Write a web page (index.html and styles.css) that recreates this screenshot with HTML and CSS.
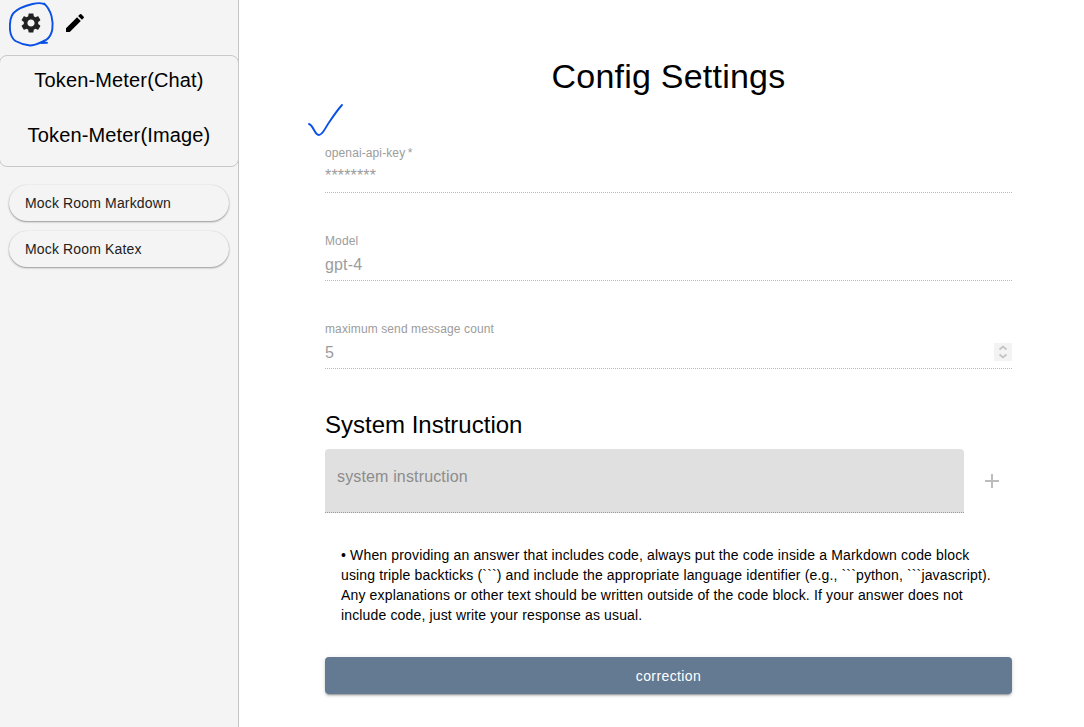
FILE: index.html
```html
<!DOCTYPE html>
<html lang="en">
<head>
<meta charset="utf-8">
<title>Config Settings</title>
<link rel="stylesheet" href="styles.css">
</head>
<body>
<div class="app">
  <aside class="sidebar">
    <div class="toolbar">
      <svg class="icon icon-gear" viewBox="0 0 24 24"><path d="M19.14 12.94c.04-.3.06-.61.06-.94 0-.32-.02-.64-.07-.94l2.03-1.58c.18-.14.23-.41.12-.61l-1.92-3.32c-.12-.22-.37-.29-.59-.22l-2.39.96c-.5-.38-1.03-.7-1.62-.94l-.36-2.54c-.04-.24-.24-.41-.48-.41h-3.84c-.24 0-.43.17-.47.41l-.36 2.54c-.59.24-1.13.57-1.62.94l-2.39-.96c-.22-.08-.47 0-.59.22L2.74 8.87c-.12.21-.08.47.12.61l2.03 1.58c-.05.3-.09.63-.09.94s.02.64.07.94l-2.03 1.58c-.18.14-.23.41-.12.61l1.92 3.32c.12.22.37.29.59.22l2.39-.96c.5.38 1.03.7 1.62.94l.36 2.54c.05.24.24.41.48.41h3.84c.24 0 .44-.17.47-.41l.36-2.54c.59-.24 1.13-.56 1.62-.94l2.39.96c.22.08.47 0 .59-.22l1.92-3.32c.12-.22.07-.47-.12-.61l-2.01-1.58zM12 15.6c-1.98 0-3.6-1.62-3.6-3.6s1.62-3.6 3.6-3.6 3.6 1.62 3.6 3.6-1.62 3.6-3.6 3.6z"/></svg>
      <svg class="icon" viewBox="0 0 24 24"><path d="M3 17.25V21h3.750L17.810 9.940l-3.750-3.750L3 17.250zM20.710 7.040c.39-.39.39-1.020 0-1.410l-2.340-2.340a.996.996 0 0 0-1.410 0l-1.830 1.830 3.750 3.750 1.830-1.830z"/></svg>
      <svg class="ink ink-circle" viewBox="0 0 60 50"><path d="M43.500 4C41 2.700 37 3 32.500 4C26 5.500 18 8.500 13.500 13C9.500 17.500 9.700 25 10 30C10.500 35 12 38.500 15.500 41C20 43.500 25 45 30 45.500C36 45.500 41 42 46 40C50 37.500 51.500 34 52.300 29.500C53 25 52.500 20 51.500 16C50 11 47.500 6.500 44 3.500M41 43L47 42.800"/></svg>
    </div>
    <section class="meters">
      <h2 class="meter">Token-Meter(Chat)</h2>
      <h2 class="meter">Token-Meter(Image)</h2>
    </section>
    <nav class="rooms">
      <button class="room">Mock Room Markdown</button>
      <button class="room">Mock Room Katex</button>
    </nav>
  </aside>
  <main class="main">
    <svg class="ink ink-check" viewBox="0 0 40 40"><path d="M4 24C8.500 25.500 9.500 34.500 13.800 35C18 35 20 28 24 22.500C28 16.500 32.500 10 37 5"/></svg>
    <h1 class="title">Config Settings</h1>
    <div class="field">
      <span class="label">openai-api-key&#8201;*</span>
      <span class="value secret">********</span>
    </div>
    <div class="field">
      <span class="label">Model</span>
      <span class="value">gpt-4</span>
    </div>
    <div class="field">
      <span class="label">maximum send message count</span>
      <div class="value number"><span>5</span>
        <svg class="spinner" viewBox="0 0 18 18"><path d="M5.500 6.500L9 3.500L12.500 6.500M5.500 11.500L9 14.500L12.500 11.500"/></svg>
      </div>
    </div>
    <h2 class="subtitle">System Instruction</h2>
    <div class="instruction">
      <div class="textbox">system instruction</div>
      <svg class="plus" viewBox="0 0 24 24"><path d="M19 13h-6v6h-2v-6H5v-2h6V5h2v6h6v2z"/></svg>
    </div>
    <p class="note">• When providing an answer that includes code, always put the code inside a Markdown code block<br>using triple backticks (```) and include the appropriate language identifier (e.g., ```python, ```javascript).<br>Any explanations or other text should be written outside of the code block. If your answer does not<br>include code, just write your response as usual.</p>
    <button class="submit">correction</button>
  </main>
</div>
</body>
</html>
```
FILE: styles.css
```css
* { box-sizing: border-box; }
body {
  margin: 0;
  background: #fff;
  color: #000;
  font-family: "Liberation Sans", Arial, sans-serif;
  letter-spacing: 0.15px;
}
h1, h2, p { margin: 0; font-weight: 400; }
button { font: inherit; border: 0; }
.app { display: flex; height: 727px; overflow: hidden; }
.sidebar {
  flex: 0 0 239px;
  background: #f4f4f4;
  border-right: 1px solid #c4c4c4;
}
.toolbar {
  position: relative;
  display: flex;
  gap: 20px;
  height: 55px;
  padding: 11px 19px;
}
.icon { width: 24px; height: 24px; }
.icon-gear { fill: #222; }
.ink {
  position: absolute;
  fill: none;
  stroke: #0a50e6;
  stroke-width: 1.9;
  stroke-linecap: round;
  stroke-linejoin: round;
}
.ink-circle { left: 0; top: 0; width: 60px; height: 50px; }
.meters {
  height: 112px;
  margin: 0 -1px;
  border: 1px solid #c8c8c8;
  border-radius: 8px;
  text-align: center;
}
.meter { height: 55px; font-size: 20px; line-height: 48px; }
.rooms {
  display: flex;
  flex-direction: column;
  gap: 10px;
  padding: 18px 9px 0;
}
.room {
  height: 36px;
  padding: 0 16px;
  border-radius: 18px;
  background: #f4f4f4;
  color: #212121;
  font-size: 14px;
  line-height: 36px;
  letter-spacing: 0.15px;
  text-align: left;
  box-shadow: 0 1px 2px rgba(0, 0, 0, 0.38), 0 0 1px rgba(0, 0, 0, 0.15);
}
.main {
  position: relative;
  flex: 1;
  padding: 55px 72px 0 86px;
}
.ink-check { left: 66px; top: 100px; width: 40px; height: 40px; }
.title {
  height: 89px;
  font-size: 34px;
  line-height: 42px;
  letter-spacing: 0.22px;
  text-align: center;
}
.field {
  display: flex;
  flex-direction: column;
  height: 49px;
  margin-bottom: 39px;
  border-bottom: 1px dotted #b8b8b8;
  color: #9c9c9c;
}
.label { font-size: 12px; line-height: 18px; letter-spacing: 0.11px; }
.value { font-size: 16px; line-height: 30px; }
.secret { line-height: 28px; }
.number { display: flex; justify-content: space-between; align-items: center; }
.spinner {
  width: 18px;
  height: 18px;
  margin-bottom: 2px;
  background: #f3f3f4;
  fill: none;
  stroke: #c3c3c6;
  stroke-width: 1.7;
}
.subtitle { height: 41px; font-size: 24px; line-height: 34px; letter-spacing: 0; }
.instruction { display: flex; align-items: center; gap: 16px; }
.textbox {
  width: 639px;
  height: 64px;
  padding: 0 12px;
  border-bottom: 1px dotted #999;
  border-radius: 4px 4px 0 0;
  background: #e0e0e0;
  color: #8c8c8c;
  font-size: 16px;
  line-height: 56px;
}
.plus { width: 24px; height: 24px; fill: #bdbdbd; }
.note {
  padding: 32px 0 32px 16px;
  font-size: 14px;
  line-height: 20px;
  white-space: nowrap;
}
.submit {
  display: block;
  width: 100%;
  height: 37px;
  border-radius: 4px;
  background: #637a92;
  color: #fff;
  font-size: 14px;
  line-height: 37px;
  letter-spacing: 0.4px;
  box-shadow: 0 3px 1px -2px rgba(0, 0, 0, 0.2), 0 2px 2px rgba(0, 0, 0, 0.14), 0 1px 5px rgba(0, 0, 0, 0.12);
}
```
